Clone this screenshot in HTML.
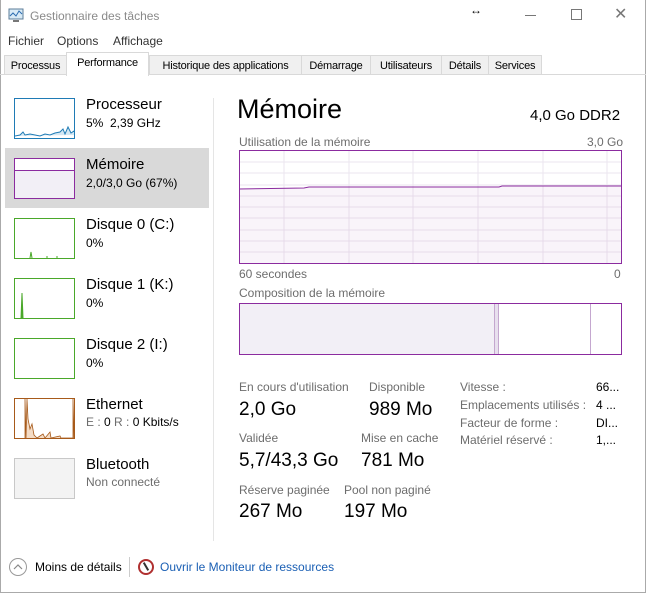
<!DOCTYPE html>
<html><head><meta charset="utf-8"><style>
*{margin:0;padding:0;box-sizing:border-box}
body{width:646px;height:593px;background:#fff;font-family:"Liberation Sans",sans-serif;position:relative;overflow:hidden;color:#000}
.a{position:absolute;white-space:nowrap}
.g{color:#6d6d6d}
.tab{position:absolute;top:55px;height:20px;border:1px solid #d9d9d9;background:#f0f0f0;font-size:11px;padding:4px 0 0 0;white-space:nowrap;overflow:hidden;text-align:center;letter-spacing:-0.2px}
.thumb{position:absolute;left:14px;width:61px;height:41px;background:#fff}
.nm{position:absolute;left:86px;font-size:15px}
.sb{position:absolute;left:86px;font-size:12px}
.lbl{font-size:12px;color:#6d6d6d}
.big{font-size:19px}
</style></head><body>
<div style="position:absolute;left:0;top:0;width:646px;height:593px;border:1px solid #aaa;border-top:none"></div>
<svg class="a" style="left:8px;top:8px" width="17" height="15"><rect x="1" y="1" width="14" height="10" fill="#d8eaf6" stroke="#5c7d99"/><polyline points="2,8 5,5 8,8 11,3 14,6" fill="none" stroke="#2a6bb0"/><rect x="5" y="12" width="6" height="2" fill="#777"/></svg>
<div class="a g" style="left:30px;top:9px;font-size:12px;color:#8a8a8a">Gestionnaire des tâches</div>
<div class="a" style="left:470px;top:3px;font-size:12px">↔</div>
<div class="a" style="left:525px;top:15px;width:11px;height:1px;background:#777"></div>
<div class="a" style="left:571px;top:9px;width:11px;height:11px;border:1px solid #777"></div>
<div class="a" style="left:614px;top:4px;font-size:16px;color:#777">✕</div>
<div class="a" style="left:8px;top:34px;font-size:12px;color:#333">Fichier</div>
<div class="a" style="left:57px;top:34px;font-size:12px;color:#333">Options</div>
<div class="a" style="left:113px;top:34px;font-size:12px;color:#333">Affichage</div>
<div class="a" style="left:0;top:74px;width:646px;height:1px;background:#d9d9d9"></div>
<div class="tab" style="left:4px;width:63px">Processus</div>
<div class="tab" style="left:66px;top:52px;height:24px;width:83px;background:#fff;border-bottom:none;padding-top:4px">Performance</div>
<div class="tab" style="left:149px;width:153px">Historique des applications</div>
<div class="tab" style="left:301px;width:70px">Démarrage</div>
<div class="tab" style="left:370px;width:72px">Utilisateurs</div>
<div class="tab" style="left:441px;width:48px">Détails</div>
<div class="tab" style="left:488px;width:54px">Services</div>
<div class="a" style="left:5px;top:148px;width:204px;height:60px;background:#d9d9d9"></div>
<div class="a" style="left:213px;top:98px;width:1px;height:443px;background:#e5e5e5"></div>

<svg class="thumb" style="top:98px;border:1px solid #1f7bb5" width="61" height="41"><polyline points="0,37 5,36 8,33 10,36 15,35 20,36 25,37 30,35 35,36 40,34 45,33 48,30 50,35 53,28 56,34 59,32 61,36" fill="#d4e8f4" stroke="#1f7bb5" stroke-width="1"/></svg>
<div class="nm" style="top:96px">Processeur</div><div class="sb" style="top:116px">5%&nbsp; 2,39 GHz</div>

<div class="thumb" style="top:158px;border:1px solid #8b2b9f;background:#fff"><div style="position:absolute;left:0;right:0;top:11px;bottom:0;background:#f2eff6;border-top:1px solid #8b2b9f"></div></div>
<div class="nm" style="top:156px">Mémoire</div><div class="sb" style="top:176px">2,0/3,0 Go (67%)</div>

<svg class="thumb" style="top:218px;border:1px solid #4aa82a" width="61" height="41"><path d="M15,39 L16,33 L17,39 M32,39 L32,37 M42,39 L42,37" stroke="#4aa82a" fill="none"/></svg>
<div class="nm" style="top:216px">Disque 0 (C:)</div><div class="sb" style="top:236px">0%</div>

<svg class="thumb" style="top:278px;border:1px solid #4aa82a" width="61" height="41"><path d="M6,39 L7,14 L8,39 Z" fill="#4aa82a" stroke="#4aa82a"/></svg>
<div class="nm" style="top:276px">Disque 1 (K:)</div><div class="sb" style="top:296px">0%</div>

<div class="thumb" style="top:338px;border:1px solid #4aa82a"></div>
<div class="nm" style="top:336px">Disque 2 (I:)</div><div class="sb" style="top:356px">0%</div>

<svg class="thumb" style="top:398px;border:1px solid #a75a1a" width="61" height="41"><polyline points="10,39 10,0 11,39 12,0 13,20 15,30 17,25 19,36 22,39 28,35 30,39 35,33 36,39 45,37 46,39 58,39 58,0 59,39 60,0 60,39" fill="#f4dcc6" stroke="#a75a1a" stroke-width="0.8"/></svg>
<div class="nm" style="top:396px">Ethernet</div><div class="sb g" style="top:415px">E : <span style="color:#000">0</span> R : <span style="color:#000">0 Kbits/s</span></div>

<div class="thumb" style="top:458px;border:1px solid #c8c8c8;background:#f3f3f3"></div>
<div class="nm" style="top:456px">Bluetooth</div><div class="sb g" style="top:475px">Non connecté</div>

<div class="a" style="left:237px;top:94px;font-size:27px">Mémoire</div>
<div class="a" style="left:530px;top:107px;font-size:15px">4,0 Go DDR2</div>
<div class="a lbl" style="left:239px;top:135px">Utilisation de la mémoire</div>
<div class="a lbl" style="left:587px;top:135px">3,0 Go</div>
<svg class="a" style="left:239px;top:150px" width="383" height="114">
<g stroke="#ebe5ef" stroke-width="1">
<path d="M45,0V114M110,0V114M174,0V114M239,0V114M304,0V114M368,0V114"/>
<path d="M0,12H383M0,23H383M0,35H383M0,46H383M0,57H383M0,68H383M0,80H383M0,91H383M0,102H383"/>
</g>
<path d="M0,39 L65,38 L70,37 L260,37 L263,36 L383,36 L383,114 L0,114Z" fill="#8b2b9f" fill-opacity="0.05" stroke="none"/>
<path d="M0,39 L65,38 L70,37 L260,37 L263,36 L383,36" fill="none" stroke="#8b2b9f"/>
<rect x="0.5" y="0.5" width="382" height="113" fill="none" stroke="#8b2b9f"/>
</svg>
<div class="a lbl" style="left:239px;top:267px">60 secondes</div>
<div class="a lbl" style="left:614px;top:267px">0</div>
<div class="a lbl" style="left:239px;top:286px">Composition de la mémoire</div>
<svg class="a" style="left:239px;top:303px" width="383" height="52">
<rect x="0" y="0" width="255" height="52" fill="#f2eff6"/>
<rect x="255" y="0" width="4" height="52" fill="#e8e0ee"/>
<path d="M255.5,0V52M259.5,0V52M351.5,0V52" stroke="#c4a7cf"/>
<rect x="0.5" y="0.5" width="382" height="51" fill="none" stroke="#8b2b9f"/>
</svg>
<div class="a lbl" style="left:239px;top:380px">En cours d'utilisation</div>
<div class="a lbl" style="left:369px;top:380px">Disponible</div>
<div class="a big" style="left:239px;top:399px">2,0 Go</div>
<div class="a big" style="left:369px;top:399px">989 Mo</div>
<div class="a lbl" style="left:239px;top:431px">Validée</div>
<div class="a lbl" style="left:361px;top:431px">Mise en cache</div>
<div class="a big" style="left:239px;top:450px">5,7/43,3 Go</div>
<div class="a big" style="left:361px;top:450px">781 Mo</div>
<div class="a lbl" style="left:239px;top:483px">Réserve paginée</div>
<div class="a lbl" style="left:344px;top:483px">Pool non paginé</div>
<div class="a big" style="left:239px;top:501px">267 Mo</div>
<div class="a big" style="left:344px;top:501px">197 Mo</div>
<div class="a lbl" style="left:460px;top:380px">Vitesse :</div>
<div class="a lbl" style="left:460px;top:398px">Emplacements utilisés :</div>
<div class="a lbl" style="left:460px;top:416px">Facteur de forme :</div>
<div class="a lbl" style="left:460px;top:433px">Matériel réservé :</div>
<div class="a" style="left:596px;top:380px;font-size:12px">66...</div>
<div class="a" style="left:596px;top:398px;font-size:12px">4 ...</div>
<div class="a" style="left:596px;top:416px;font-size:12px">DI...</div>
<div class="a" style="left:596px;top:433px;font-size:12px">1,...</div>
<div class="a" style="left:9px;top:558px;width:18px;height:18px;border:1px solid #999;border-radius:50%"></div>
<svg class="a" style="left:12px;top:562px" width="12" height="10"><polyline points="2,7 6,3 10,7" fill="none" stroke="#888" stroke-width="1.2"/></svg>
<div class="a" style="left:35px;top:560px;font-size:12px">Moins de détails</div>
<div class="a" style="left:129px;top:557px;width:1px;height:20px;background:#ccc"></div>
<div class="a" style="left:138px;top:559px;width:16px;height:16px;border:2px solid #b03030;border-radius:50%;background:#fff"></div>
<div class="a" style="left:145px;top:562px;width:2px;height:9px;background:#333;transform:rotate(-30deg)"></div>
<div class="a" style="left:160px;top:560px;font-size:12px;color:#1a5fb4">Ouvrir le Moniteur de ressources</div>
</body></html>
